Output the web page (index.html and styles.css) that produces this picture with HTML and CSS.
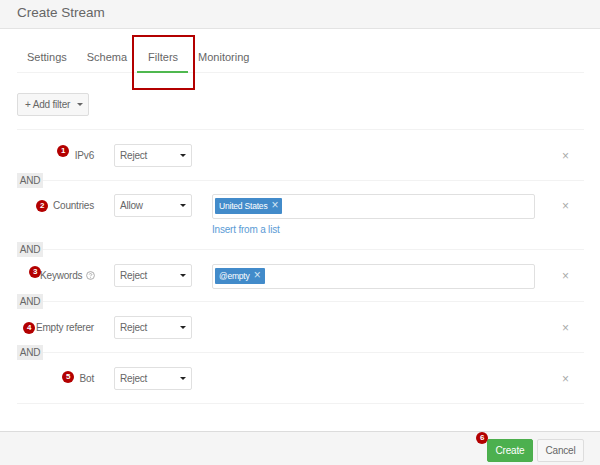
FILE: index.html
```html
<!DOCTYPE html>
<html lang="en">
<head>
  <meta charset="UTF-8" />
  <title>Create Stream</title>
  <link rel="stylesheet" href="styles.css">
</head>
<body>
  <div class="modal">
    <header class="modal-header">Create Stream</header>

    <div class="modal-body">
      <nav class="tabs">
        <a class="tab">Settings</a>
        <a class="tab">Schema</a>
        <a class="tab active">Filters</a>
        <a class="tab">Monitoring</a>
        <span class="highlight-box"></span>
      </nav>

      <button class="btn add-btn">+ Add filter <span class="caret"></span></button>

      <div class="filters">
        <div class="filter-row first">
          <div class="filter-label"><span class="step step-ipv6">1</span>IPv6</div>
          <div class="select">Reject<span class="caret dark"></span></div>
          <div class="filter-value"></div>
          <span class="remove">×</span>
        </div>

        <div class="and"><span>AND</span></div>

        <div class="filter-row countries">
          <div class="filter-label"><span class="step step-countries">2</span>Countries</div>
          <div class="select">Allow<span class="caret dark"></span></div>
          <div class="filter-value">
            <div class="tag-input"><span class="tag">United States <i>×</i></span></div>
            <a class="list-link">Insert from a list</a>
          </div>
          <span class="remove">×</span>
        </div>

        <div class="and"><span>AND</span></div>

        <div class="filter-row keywords">
          <div class="filter-label"><span class="step step-keywords">3</span>Keywords
            <svg class="help" width="9" height="9" viewBox="0 0 9 9"><circle cx="4.5" cy="4.5" r="3.9" fill="none" stroke="#999" stroke-width=".8"/><path d="M3.2 3.5c.2-1.2 2.6-1.2 2.6.1 0 .9-1.3.8-1.3 1.7" fill="none" stroke="#999" stroke-width=".8"/><circle cx="4.5" cy="6.8" r=".5" fill="#999"/></svg>
          </div>
          <div class="select">Reject<span class="caret dark"></span></div>
          <div class="filter-value">
            <div class="tag-input"><span class="tag">@empty <i>×</i></span></div>
          </div>
          <span class="remove">×</span>
        </div>

        <div class="and"><span>AND</span></div>

        <div class="filter-row">
          <div class="filter-label"><span class="step step-referer">4</span>Empty referer</div>
          <div class="select">Reject<span class="caret dark"></span></div>
          <div class="filter-value"></div>
          <span class="remove">×</span>
        </div>

        <div class="and"><span>AND</span></div>

        <div class="filter-row last">
          <div class="filter-label"><span class="step step-bot">5</span>Bot</div>
          <div class="select">Reject<span class="caret dark"></span></div>
          <div class="filter-value"></div>
          <span class="remove">×</span>
        </div>
      </div>
    </div>

    <footer class="modal-footer">
      <button class="btn create"><span class="step step-create">6</span>Create</button>
      <button class="btn cancel">Cancel</button>
    </footer>
  </div>
</body>
</html>
```

FILE: styles.css
```css
:root {
  --text: #666;
  --line: #f2f2f2;
  --border: #e0e0e0;
  --red: #b30000;
  --green: #4cae4c;
}

html, body {
  margin: 0;
  padding: 0;
  height: 100%;
  overflow: hidden;
  font-family: 'Liberation Sans', Arial, sans-serif;
  font-size: 10px;
  letter-spacing: -0.2px;
  color: var(--text);
  background: white;
}

.modal {
  height: 465px;
  display: flex;
  flex-direction: column;
}

.modal-header {
  height: 29px;
  box-sizing: border-box;
  padding: 4px 17px 0;
  font-size: 13.5px;
  letter-spacing: 0;
  line-height: 17px;
  background: #f5f5f5;
  border-bottom: 1px solid #e3e3e3;
}

.modal-body {
  flex: 1;
  padding: 0 16px 0 17px;
}

.tabs {
  position: relative;
  display: flex;
  height: 44px;
  box-sizing: border-box;
  border-bottom: 1px solid var(--line);
  font-size: 11px;
  letter-spacing: 0;
}

.tab {
  padding: 21px 10px 0;
  line-height: 14px;
}

.tab.active {
  height: 21px;
  padding: 21px 10px 0 11px;
  border-bottom: 2px solid #4fb84f;
}

.highlight-box {
  position: absolute;
  left: 115px;
  top: 6px;
  width: 59px;
  height: 51px;
  border: 2px solid var(--red);
}

.btn {
  font: inherit;
  letter-spacing: inherit;
  color: var(--text);
  background: #f7f7f7;
  border: 1px solid #ddd;
  border-radius: 2px;
  height: 23px;
  padding: 0 8px;
}

.add-btn {
  display: block;
  box-sizing: border-box;
  margin-top: 20px;
  width: 72px;
  padding: 0 0 0 7px;
  text-align: left;
}

.caret {
  display: inline-block;
  margin-left: 4px;
  vertical-align: 2px;
  border-top: 3px solid #666;
  border-left: 3px solid transparent;
  border-right: 3px solid transparent;
}

.caret.dark {
  border-top-color: #222;
  margin: 0;
}

.filters {
  margin-top: 13px;
  border-top: 1px solid var(--line);
  border-bottom: 1px solid var(--line);
}

.filter-row {
  display: flex;
  align-items: flex-start;
  padding: 7px 0 6px;
}

.filter-row.first {
  padding-top: 14px;
}

.filter-row.countries {
  padding: 6px 0 5px;
}

.filter-row.keywords {
  padding: 7px 0 5px;
}

.filter-row.last {
  padding-bottom: 13px;
}

.filter-label {
  position: relative;
  width: 77px;
  line-height: 23px;
  text-align: right;
  white-space: nowrap;
}

.help {
  vertical-align: -1px;
  margin-left: 1px;
  margin-right: -1px;
}

.select {
  display: flex;
  justify-content: space-between;
  align-items: center;
  box-sizing: border-box;
  width: 78px;
  height: 23px;
  margin-left: 20px;
  padding: 0 5px;
  background: white;
  border: 1px solid var(--border);
  border-radius: 2px;
}

.filter-value {
  width: 323px;
  margin-left: 20px;
}

.tag-input {
  box-sizing: border-box;
  height: 25px;
  padding: 3px 2px;
  background: white;
  border: 1px solid var(--border);
  border-radius: 2px;
}

.tag {
  display: inline-block;
  padding: 0 4px;
  height: 16px;
  line-height: 16px;
  font-size: 8.5px;
  color: white;
  background: #428bca;
  border-radius: 1px;
}

.tag i {
  font-style: normal;
  font-size: 12px;
  line-height: 10px;
  margin-left: 2px;
  color: #d5e6f5;
}

.list-link {
  display: block;
  margin-top: 4px;
  height: 14px;
  line-height: 14px;
  color: #5b9bd5;
}

.remove {
  margin-left: 27px;
  height: 23px;
  line-height: 25px;
  font-size: 12px;
  color: #aaa;
}

.and {
  display: flex;
  align-items: center;
}

.and::after {
  content: "";
  flex: 1;
  height: 1px;
  background: var(--line);
}

.and span {
  width: 26px;
  height: 15px;
  line-height: 15px;
  text-align: center;
  background: #ececec;
}

.step {
  position: absolute;
  width: 12px;
  height: 12px;
  border-radius: 50%;
  background: var(--red);
  color: white;
  font-size: 8px;
  font-weight: bold;
  line-height: 12px;
  text-align: center;
}

.step-ipv6 { left: 40px; top: 1px; }
.step-countries { left: 19px; top: 6px; }
.step-keywords { left: 12px; top: 2px; }
.step-referer { left: 6px; top: 6px; }
.step-bot { left: 45px; top: 4px; }
.step-create { left: -12px; top: -8px; }

.modal-footer {
  height: 34px;
  box-sizing: border-box;
  display: flex;
  align-items: flex-start;
  justify-content: flex-end;
  gap: 4px;
  padding: 7px 16px 0 0;
  background: #f5f5f5;
  border-top: 1px solid #dcdcdc;
}

.btn.create {
  position: relative;
  width: 46px;
  padding: 0;
  color: white;
  background: #4cb04f;
  border-color: var(--green);
}

.btn.cancel {
  width: 47px;
  padding: 0;
}
```
